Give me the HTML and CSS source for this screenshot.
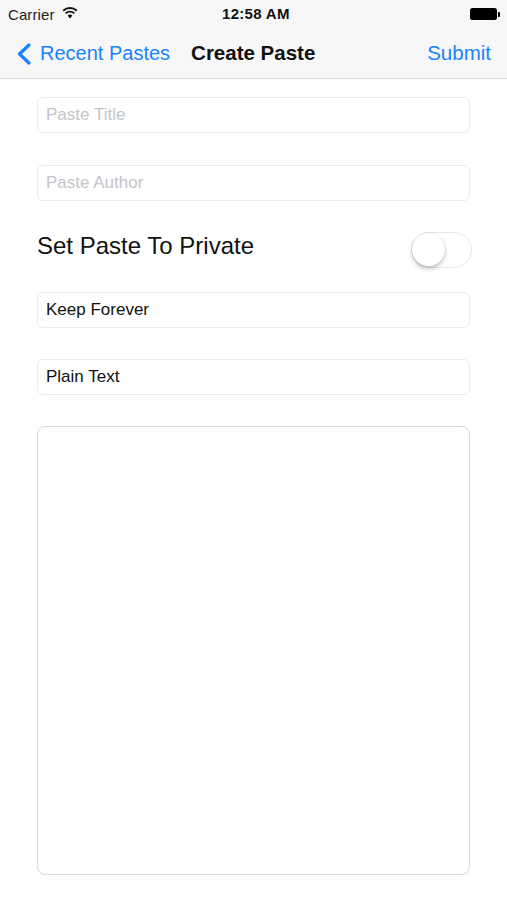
FILE: index.html
```html
<!DOCTYPE html>
<html>
<head>
<meta charset="utf-8">
<link rel="stylesheet" href="styles.css">
</head>
<body>
<div class="screen">
  <header class="top">
    <div class="status">
      <div class="status-left">
        <span class="carrier">Carrier</span>
        <svg class="wifi" width="16" height="12" viewBox="0 0 16 12">
          <path d="M8 11.5 L5.6 8.6 A3.6 3.6 0 0 1 10.4 8.6 Z" fill="#111"/>
          <path d="M3.6 6.4 A6.4 6.4 0 0 1 12.4 6.4" stroke="#111" stroke-width="1.9" fill="none"/>
          <path d="M1.2 3.7 A9.8 9.8 0 0 1 14.8 3.7" stroke="#111" stroke-width="1.9" fill="none"/>
        </svg>
      </div>
      <span class="time">12:58 AM</span>
      <div class="battery"><span class="cell"></span><span class="nub"></span></div>
    </div>
    <nav class="navbar">
      <a class="back">
        <svg class="chev" width="16" height="22" viewBox="0 0 16 22">
          <path d="M13 2 L3.5 11 L13 20" stroke="#1a82fb" stroke-width="3.2" fill="none" stroke-linecap="round" stroke-linejoin="round"/>
        </svg>
        <span>Recent Pastes</span>
      </a>
      <span class="title">Create Paste</span>
      <a class="submit">Submit</a>
    </nav>
  </header>
  <main class="form">
    <div class="field f-title"><span class="ph">Paste Title</span></div>
    <div class="field f-author"><span class="ph">Paste Author</span></div>
    <div class="row">
      <span class="label">Set Paste To Private</span>
      <span class="switch"><span class="knob"></span></span>
    </div>
    <div class="field f-keep"><span class="val">Keep Forever</span></div>
    <div class="field f-plain"><span class="val">Plain Text</span></div>
    <div class="textarea"></div>
  </main>
</div>
</body>
</html>
```
FILE: styles.css
```css
* { box-sizing: border-box; }
html, body { margin: 0; padding: 0; background: #fff; }
body { font-family: "Liberation Sans", Arial, sans-serif; color: #111; }
.screen { width: 507px; height: 900px; overflow: hidden; }

.top { background: #f7f7f7; border-bottom: 1px solid #d6d6d6; }
.status { height: 28px; display: flex; align-items: center; justify-content: space-between; padding: 0 7px 0 8px; position: relative; font-size: 15px; }
.status-left { display: flex; align-items: center; gap: 7px; }
.carrier { color: #222; letter-spacing: 0.1px; }
.wifi { margin-top: -2px; }
.time { font-weight: bold; position: absolute; left: 222px; top: 5px; letter-spacing: 0.3px; }
.battery { display: flex; align-items: center; }
.cell { width: 27px; height: 12px; background: #000; border-radius: 2.5px; }
.nub { width: 2px; height: 5px; background: #000; margin-left: 1px; border-radius: 0 1px 1px 0; }

.navbar { height: 50px; display: flex; align-items: center; padding: 0 16px 0 16px; font-size: 20px; }
.back { display: flex; align-items: center; color: #1a82fb; }
.chev { margin-right: 8px; margin-top: 1px; }
.title { font-weight: bold; font-size: 20.5px; margin-left: 21px; color: #111; }
.submit { margin-left: auto; color: #1a82fb; font-size: 20.5px; }

.form { padding: 18px 37px 0 37px; display: flex; flex-direction: column; }
.field { height: 36px; border: 1px solid #ececec; border-radius: 6px; display: flex; align-items: center; padding-left: 8px; font-size: 17px; }
.ph { color: #c4c4c9; }
.val { color: #111; }
.f-title { margin-bottom: 32px; }
.f-author { margin-bottom: 31px; }
.row { height: 36px; display: flex; justify-content: space-between; align-items: flex-start; margin-bottom: 24px; }
.label { font-size: 24px; line-height: 28px; margin-top: 0; color: #111; }
.switch { width: 61px; height: 36px; border-radius: 18px; border: 1.5px solid #e6e6e6; background: #fff; position: relative; margin-right: -2px; }
.knob { position: absolute; left: 0; top: 0; width: 33px; height: 33px; border-radius: 50%; background: #fff; box-shadow: 0 3px 4px rgba(0,0,0,0.22), 0 0 0 0.5px rgba(0,0,0,0.08); }
.f-keep { margin-bottom: 31px; }
.f-plain { margin-bottom: 31px; }
.textarea { height: 449px; border: 1.5px solid #d9d9d9; border-radius: 8px; }
```
